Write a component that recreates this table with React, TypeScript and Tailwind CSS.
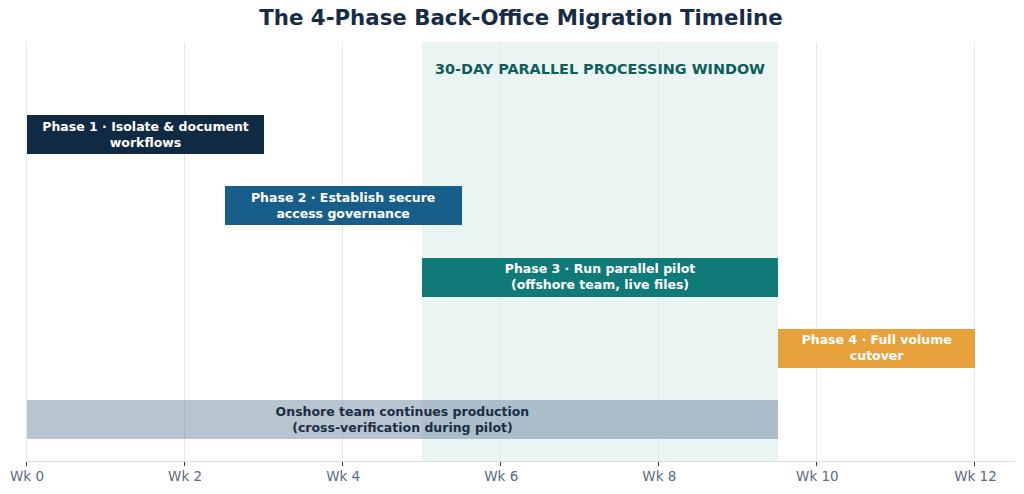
const SPAN = 12.5

const ticks = [0, 2, 4, 6, 8, 10, 12]

type Bar = {
  start: number
  end: number
  lines: string[]
  className: string
}

const bars: Bar[] = [
  { start: 0, end: 3, lines: ["Phase 1 · Isolate & document", "workflows"], className: "bg-[#102a43] text-white" },
  { start: 2.5, end: 5.5, lines: ["Phase 2 · Establish secure", "access governance"], className: "bg-[#175f8a] text-white" },
  { start: 5, end: 9.5, lines: ["Phase 3 · Run parallel pilot", "(offshore team, live files)"], className: "bg-[#0f7a77] text-white" },
  { start: 9.5, end: 12, lines: ["Phase 4 · Full volume", "cutover"], className: "bg-[#e8a23c] text-white" },
  { start: 0, end: 9.5, lines: ["Onshore team continues production", "(cross-verification during pilot)"], className: "bg-[#627c97]/45 text-[#1a2e44]" },
]

const pct = (w: number) => `${(w / SPAN) * 100}%`

export default function App() {
  return (
    <div className="w-[1024px] h-[494px] bg-white font-['DejaVu_Sans',sans-serif] overflow-hidden">
      <div className="ml-[27px] w-[988px]">
        <h1 className="h-[42px] pt-[5px] text-center text-[21.3px] font-bold leading-[26px] text-[#172d46]">
          The 4-Phase Back-Office Migration Timeline
        </h1>

        <div className="relative h-[420px] border-b border-[#d3dde6]">
          {/* background layers: parallel window + grid */}
          <div
            className="absolute inset-y-0 bg-[#eaf4f3]"
            style={{ left: pct(5), width: pct(4.5) }}
          />
          {ticks.map((t) => (
            <div
              key={t}
              className="absolute inset-y-0 w-px -ml-px bg-[#e2e9ef]"
              style={{ left: pct(t) }}
            />
          ))}

          {/* bars */}
          <div className="relative flex flex-col">
            <div className="flex h-[73px] pt-[19px]">
              <div
                className="text-center text-[14.4px] font-bold leading-[16px] text-[#0e5e5a] whitespace-nowrap"
                style={{ marginLeft: pct(5), width: pct(4.5) }}
              >
                30-DAY PARALLEL PROCESSING WINDOW
              </div>
            </div>
            <div className="flex flex-col gap-[32.3px]">
              {bars.map((b) => (
                <div key={b.lines[0]} className="flex h-[39px]">
                  <div
                    className={`flex flex-col items-center justify-center text-[12.5px] font-bold leading-[16px] ${b.className}`}
                    style={{ marginLeft: pct(b.start), width: pct(b.end - b.start) }}
                  >
                    {b.lines.map((l) => (
                      <span key={l}>{l}</span>
                    ))}
                  </div>
                </div>
              ))}
            </div>
          </div>

          {ticks.map((t) => (
            <div
              key={`tick-${t}`}
              className="absolute -bottom-[5px] h-[4px] w-px -ml-px bg-[#3b3b3b]"
              style={{ left: pct(t) }}
            />
          ))}
        </div>

        <div className="relative h-[31px]">
          {ticks.map((t) => (
            <span
              key={t}
              className="absolute top-[6px] -translate-x-1/2 text-[13.5px] leading-[16px] text-[#5a6b7d] whitespace-nowrap"
              style={{ left: pct(t) }}
            >
              Wk {t}
            </span>
          ))}
        </div>
      </div>
    </div>
  )
}
